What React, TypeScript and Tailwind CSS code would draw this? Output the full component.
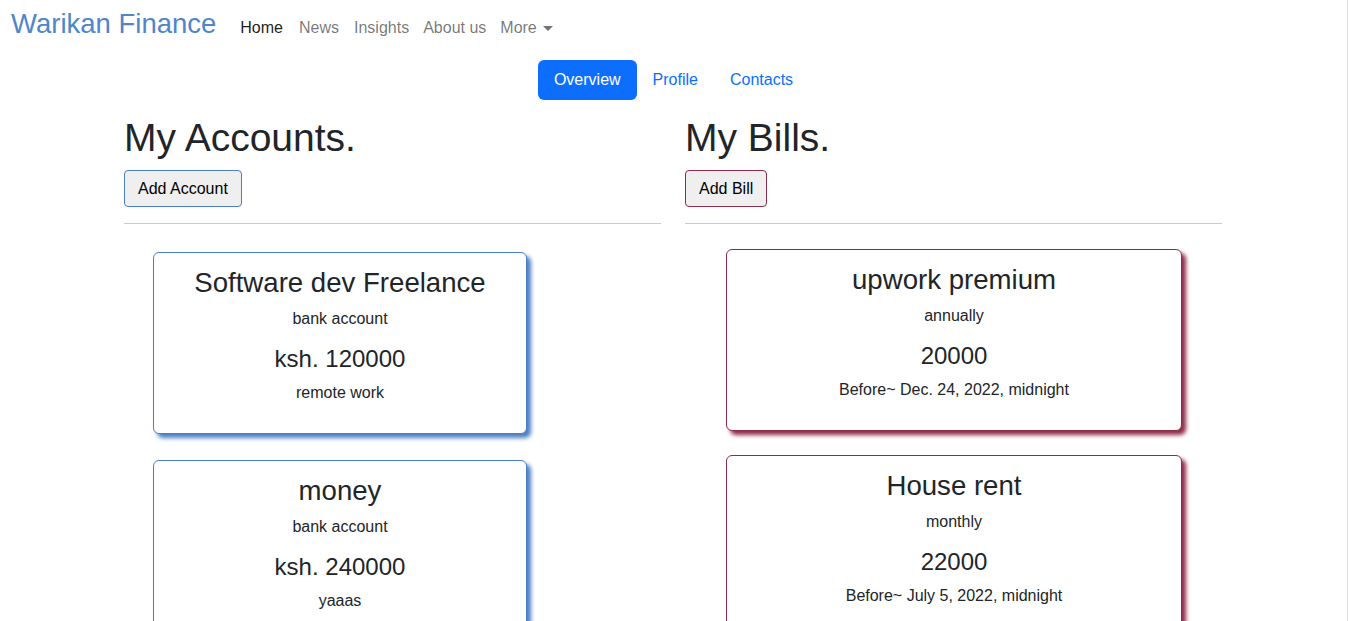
const accounts = [
  { name: 'Software dev Freelance', kind: 'bank account', amount: 'ksh. 120000', note: 'remote work' },
  { name: 'money', kind: 'bank account', amount: 'ksh. 240000', note: 'yaaas' },
];

const bills = [
  { name: 'upwork premium', period: 'annually', amount: '20000', due: 'Before~ Dec. 24, 2022, midnight' },
  { name: 'House rent', period: 'monthly', amount: '22000', due: 'Before~ July 5, 2022, midnight' },
];

function Card({
  title,
  sub,
  amount,
  foot,
  tone,
}: {
  title: string;
  sub: string;
  amount: string;
  foot: string;
  tone: 'blue' | 'red';
}) {
  const toneClass =
    tone === 'blue'
      ? 'border-[#4a7fc4] shadow-[4px_4px_4px_#4a7fc4]'
      : 'border-[#8e2b47] shadow-[4px_4px_4px_#8e2b47]';
  return (
    <div className={`h-[182px] rounded-md border bg-white pt-[13px] text-center text-[#212529] ${toneClass}`}>
      <h3 className="text-[27.6px] leading-[34px]">{title}</h3>
      <p className="mt-[7px] text-base leading-6">{sub}</p>
      <h4 className="mt-[13px] text-[24px] leading-[29px]">{amount}</h4>
      <p className="mt-[8px] text-base leading-6">{foot}</p>
    </div>
  );
}

export default function App() {
  return (
    <div className="min-h-[621px] border-r border-[#e5e5e5] bg-white font-['Liberation_Sans',Arial,sans-serif] text-[#212529]">
      <nav className="flex h-[54px] items-start px-[11px] pt-[7px]">
        <a className="mr-[16px] text-[27.5px] leading-[33px] text-[#4f86c8]">Warikan Finance</a>
        <ul className="flex items-center pt-[9px] text-base leading-6">
          <li className="px-2 text-[rgba(0,0,0,0.9)]">Home</li>
          <li className="px-2 text-[rgba(0,0,0,0.55)]">News</li>
          <li className="px-[7px] text-[rgba(0,0,0,0.55)]">Insights</li>
          <li className="px-[7px] text-[rgba(0,0,0,0.55)]">About us</li>
          <li className="flex items-center gap-[6px] px-[7px] text-[rgba(0,0,0,0.55)]">
            More
            <span className="mt-[1px] h-0 w-0 border-x-[5px] border-t-[5px] border-x-transparent border-t-[rgba(0,0,0,0.55)]" />
          </li>
        </ul>
      </nav>

      <div className="mt-[6px] flex justify-center text-base leading-6">
        <span className="rounded-md bg-[#0d6efd] px-4 py-2 pb-[7px] text-white">Overview</span>
        <span className="px-4 py-2 text-[#0d6efd]">Profile</span>
        <span className="px-4 py-2 text-[#0d6efd]">Contacts</span>
      </div>

      <div className="mx-[124px] mt-[14px] grid grid-cols-[537px_537px] gap-x-[24px]">
        <section>
          <h1 className="mb-2 text-[39px] leading-[48px]">My Accounts.</h1>
          <button className="h-[37px] rounded-[4px] border border-[#4a7fc4] bg-[#efefef] px-[13px] text-base text-black">
            Add Account
          </button>
          <hr className="mt-4 border-t border-[#c9cacb]" />
          <div className="mt-[28px] ml-[29px] flex w-[374px] flex-col gap-[26px]">
            {accounts.map((a) => (
              <Card key={a.name} title={a.name} sub={a.kind} amount={a.amount} foot={a.note} tone="blue" />
            ))}
          </div>
        </section>

        <section>
          <h1 className="mb-2 text-[39px] leading-[48px]">My Bills.</h1>
          <button className="h-[37px] rounded-[4px] border border-[#8e2b47] bg-[#efefef] px-[13px] text-base text-black">
            Add Bill
          </button>
          <hr className="mt-4 border-t border-[#c9cacb]" />
          <div className="mt-[25px] ml-[41px] flex w-[456px] flex-col gap-[24px]">
            {bills.map((b) => (
              <Card key={b.name} title={b.name} sub={b.period} amount={b.amount} foot={b.due} tone="red" />
            ))}
          </div>
        </section>
      </div>
    </div>
  );
}
